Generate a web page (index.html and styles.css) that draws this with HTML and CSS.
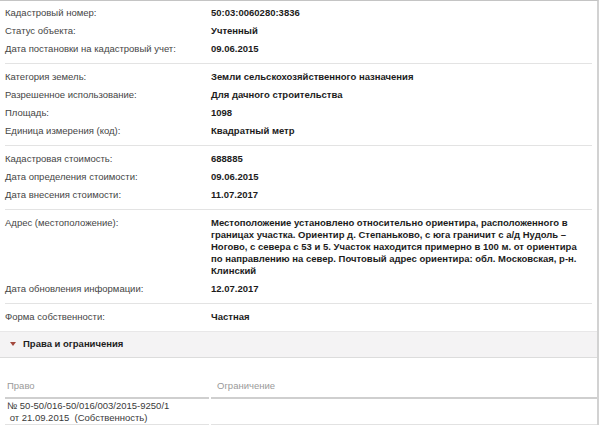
FILE: index.html
```html
<!DOCTYPE html>
<html lang="ru">
<head>
<meta charset="utf-8">
<title>Кадастровый объект</title>
<link rel="stylesheet" href="styles.css">
</head>
<body>
<div class="panel">
  <div class="group group-first">
    <div class="row"><div class="label">Кадастровый номер:</div><div class="value">50:03:0060280:3836</div></div>
    <div class="row"><div class="label">Статус объекта:</div><div class="value">Учтенный</div></div>
    <div class="row"><div class="label">Дата постановки на кадастровый учет:</div><div class="value">09.06.2015</div></div>
  </div>
  <div class="group">
    <div class="row"><div class="label">Категория земель:</div><div class="value">Земли сельскохозяйственного назначения</div></div>
    <div class="row"><div class="label">Разрешенное использование:</div><div class="value">Для дачного строительства</div></div>
    <div class="row"><div class="label">Площадь:</div><div class="value">1098</div></div>
    <div class="row"><div class="label">Единица измерения (код):</div><div class="value">Квадратный метр</div></div>
  </div>
  <div class="group">
    <div class="row"><div class="label">Кадастровая стоимость:</div><div class="value">688885</div></div>
    <div class="row"><div class="label">Дата определения стоимости:</div><div class="value">09.06.2015</div></div>
    <div class="row"><div class="label">Дата внесения стоимости:</div><div class="value">11.07.2017</div></div>
  </div>
  <div class="group">
    <div class="row"><div class="label">Адрес (местоположение):</div><div class="value">Местоположение установлено относительно ориентира, расположенного в границах участка. Ориентир д. Степаньково, с юга граничит с а/д Нудоль – Ногово, с севера с 53 и 5. Участок находится примерно в 100 м. от ориентира по направлению на север. Почтовый адрес ориентира: обл. Московская, р-н. Клинский</div></div>
    <div class="row"><div class="label">Дата обновления информации:</div><div class="value">12.07.2017</div></div>
  </div>
  <div class="group group-last">
    <div class="row"><div class="label">Форма собственности:</div><div class="value">Частная</div></div>
  </div>
  <div class="section-head">
    <span class="caret"></span><span class="section-title">Права и ограничения</span>
  </div>
  <div class="rights">
    <div class="rights-head rights-head-first">Право</div>
    <div class="rights-head rights-head-second">Ограничение</div>
    <div class="rights-cell">№ 50-50/016-50/016/003/2015-9250/1<br>&nbsp;от 21.09.2015&nbsp; (Собственность)</div>
    <div class="rights-cell"></div>
  </div>
</div>
</body>
</html>
```

FILE: styles.css
```css
html, body {
  margin: 0;
  padding: 0;
  background: #ffffff;
}

body {
  font-family: "Liberation Sans", Arial, sans-serif;
  font-size: 9.5px;
  color: #3a3a3a;
}

.panel {
  width: 597px;
  border-top: 1px solid #c4c4c4;
  border-right: 2px solid #d2d2d2;
  background: #ffffff;
}

.group {
  margin: 0 5px;
  padding: 4px 0 5px;
  border-bottom: 1px solid #e3e3e3;
}

.group-first {
  padding-top: 3px;
}

.group-last {
  border-bottom: none;
}

.row {
  display: flex;
  padding: 3px 0;
  line-height: 12px;
}

.label {
  width: 206px;
  flex: none;
  color: #454545;
}

.value {
  width: 368px;
  font-weight: bold;
  color: #1c1c1c;
}

.section-head {
  display: flex;
  align-items: center;
  padding: 6px 0 7px 10px;
  line-height: 12px;
  background: #f4f3f4;
  border-top: 1px solid #e8e7e8;
  border-bottom: 1px solid #dcdcdc;
}

.caret {
  width: 0;
  height: 0;
  border-left: 3px solid transparent;
  border-right: 3px solid transparent;
  border-top: 4px solid #a2473c;
  margin-right: 7px;
}

.section-title {
  font-weight: bold;
  color: #1e1e1e;
}

.rights {
  display: grid;
  grid-template-columns: 204px 1fr;
  column-gap: 2px;
  margin-left: 5px;
  line-height: 12px;
}

.rights-head {
  padding: 22px 0 5px;
  color: #9a9a9a;
  border-bottom: 2px solid #cfcfcf;
}

.rights-head-first {
  padding-left: 2px;
}

.rights-head-second {
  padding-left: 6px;
}

.rights-cell {
  padding: 1px 0 0 2px;
  color: #3a3a3a;
  border-bottom: 1px solid #e2e2e2;
}
```
